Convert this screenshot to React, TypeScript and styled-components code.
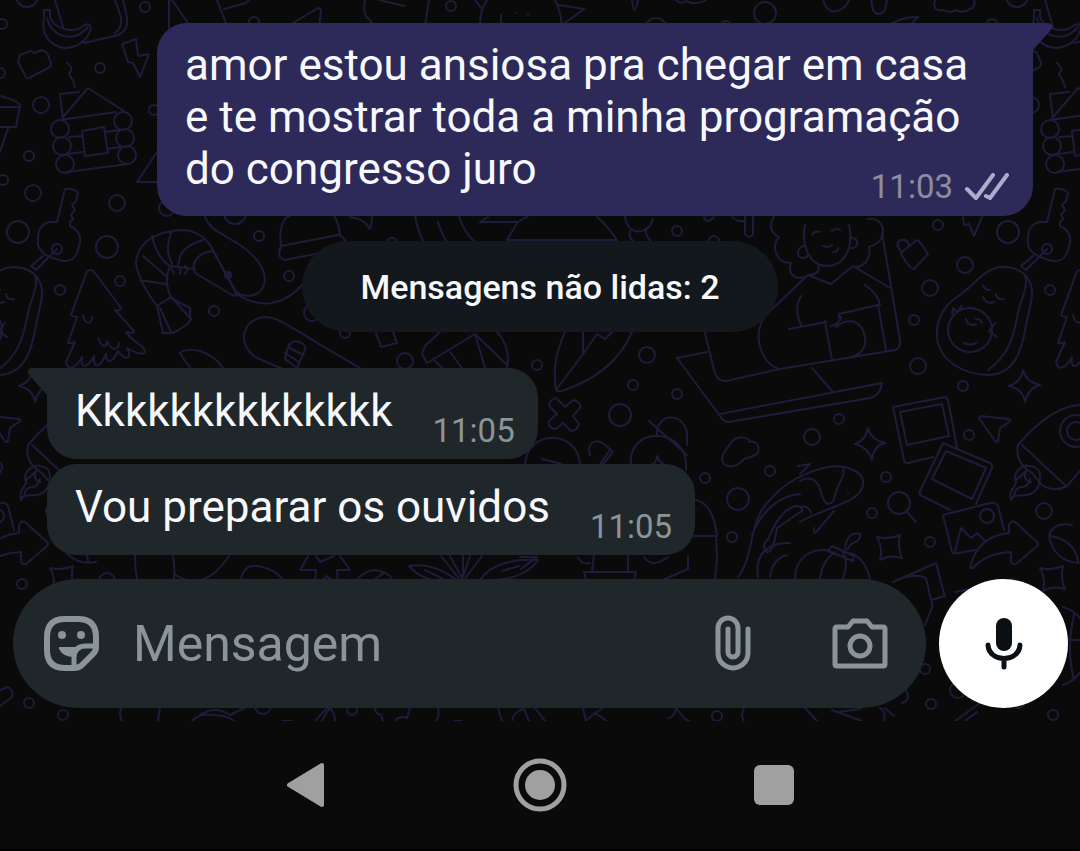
import React from "react";
import styled, { createGlobalStyle, css } from "styled-components";

const color = {
  page: "#0a0a0a",
  doodle: "#201b3a",
  sent: "#2d2a5a",
  received: "#20272a",
  notice: "#12181b",
  text: "#f7f8fc",
  muted: "#8b9498",
  sentMuted: "#8c8d9d",
  check: "#b3abcd",
  nav: "#a0a0a0",
};

const GlobalStyle = createGlobalStyle`
  *, *::before, *::after { box-sizing: border-box; }
  body {
    margin: 0;
    background: ${color.page};
    color: ${color.text};
    font-family: Roboto, "Liberation Sans", sans-serif;
  }
  button { border: 0; padding: 0; background: none; cursor: pointer; }
`;

const Screen = styled.div`
  display: flex;
  flex-direction: column;
  min-height: 100vh;
  background: ${color.page};
`;

const Chat = styled.main`
  position: relative;
  isolation: isolate;
  flex: 1;
  display: flex;
  flex-direction: column;
  overflow: hidden;
`;

const WallpaperArt = styled.svg`
  position: absolute;
  inset: 0;
  z-index: -1;
  width: 100%;
  height: 100%;
  fill: none;
  stroke: ${color.doodle};
  stroke-width: 2;
  stroke-linecap: round;
  stroke-linejoin: round;
`;

const Messages = styled.section`
  flex: 1;
  display: flex;
  flex-direction: column;
  justify-content: flex-end;
  padding: 23px 47px 24px;
`;

const Bubble = styled.article<{ $sent?: boolean; $tail?: boolean }>`
  position: relative;
  display: flow-root;
  max-width: 876px;
  font-size: 44px;
  line-height: 52px;
  border-radius: 30px;
  ${({ $sent }) =>
    $sent
      ? css`
          align-self: flex-end;
          padding: 16px 40px 9px 28px;
          background: ${color.sent};
        `
      : css`
          align-self: flex-start;
          padding: 17px 39px 8px 28px;
          background: ${color.received};
        `}
  ${({ $sent, $tail }) =>
    $tail && ($sent ? "border-top-right-radius: 0;" : "border-top-left-radius: 0;")}
  & + & { margin-top: 5px; }
`;

const Tail = styled.svg<{ $sent?: boolean }>`
  position: absolute;
  top: 0;
  width: 20px;
  height: 30px;
  ${({ $sent }) =>
    $sent
      ? css`
          left: 100%;
          fill: ${color.sent};
        `
      : css`
          right: 100%;
          fill: ${color.received};
          transform: scaleX(-1);
        `}
`;

const Meta = styled.span<{ $sent?: boolean }>`
  float: right;
  display: flex;
  align-items: center;
  gap: 12px;
  margin-top: ${({ $sent }) => ($sent ? 24 : 26)}px;
  margin-left: 40px;
  margin-right: -16px;
  color: ${({ $sent }) => ($sent ? color.sentMuted : color.muted)};
  font-size: 33px;
  line-height: 40px;
`;

const Notice = styled.p`
  align-self: center;
  margin: 25px 0 36px;
  padding: 26px 58px 25px;
  border-radius: 46px;
  background: ${color.notice};
  font-size: 34px;
  font-weight: 500;
  line-height: 40px;
`;

const Composer = styled.form`
  display: flex;
  align-items: center;
  gap: 13px;
  padding: 0 12px 13px 13px;
`;

const Field = styled.div`
  flex: 1;
  min-width: 0;
  display: flex;
  align-items: center;
  height: 129px;
  padding: 0 38px 0 30px;
  border-radius: 65px;
  background: ${color.received};
`;

const TextInput = styled.input`
  flex: 1;
  min-width: 0;
  margin: 0 16px 0 33px;
  padding: 0;
  border: 0;
  outline: 0;
  background: none;
  color: ${color.text};
  font: 400 50px/60px Roboto, "Liberation Sans", sans-serif;
  &::placeholder { color: ${color.muted}; opacity: 1; }
`;

const IconButton = styled.button`
  display: flex;
  flex: none;
  color: ${color.muted};
  & + & { margin-left: 81px; }
`;

const MicButton = styled.button`
  flex: none;
  display: grid;
  place-items: center;
  width: 129px;
  height: 129px;
  border-radius: 50%;
  background: #fff;
  color: #0b1014;
`;

const NavBar = styled.nav`
  display: flex;
  align-items: center;
  justify-content: center;
  gap: 174px;
  height: 130px;
  border-bottom: 2px solid #000;
`;

const NavButton = styled.button`
  display: grid;
  place-items: center;
  width: 60px;
  height: 60px;
  color: ${color.nav};
`;

const TILE = 990;

const smallRings = [
  [2, 24], [145, 7], [100, 68], [0, 73], [29, 156], [3, 180], [154, 110], [60, 290], [120, 281],
  [259, 236], [289, 276], [214, 311], [345, 333], [254, 22], [451, 6], [726, 26], [938, 225],
  [914, 320], [537, 365], [633, 385], [677, 394], [705, 478], [770, 471], [732, 537], [963, 386],
  [839, 419], [969, 435], [886, 477], [872, 513], [930, 542], [22, 584], [29, 703], [63, 715],
  [352, 710], [717, 716], [925, 669], [931, 704], [392, 243], [677, 231], [714, 241],
];
const mediumRings = [
  [41, 105], [33, 193], [117, 203], [167, 208], [312, 313], [965, 265], [930, 288], [918, 366],
  [647, 355], [812, 437], [54, 511], [107, 581], [263, 706], [405, 361], [958, 690],
];
const largeRings = [
  [27, -4], [18, 232], [107, 247], [235, 213], [765, 13], [620, 415], [738, 499], [656, 29],
];

const doodles = [
  // banana and cup
  "M44 10l6 0v7c4 12 23 17 33 9q6-4 8 1c-2 13-14 21-26 21C47 46 41 31 44 18zM47 18c4 19 27 26 41 9",
  "M55 0l8 27M115 0c6 15 10 26 0 33M123 0c4 18 9 28-5 35l-34 8",
  // toy brick, smoke, lightning
  "M18 62l2-7 11-4 3 2 8-3 5 3 4 10q0 4-3 5L29 78q-3 1-4-3z",
  "M67 63c6 5 5 8 2 10c1 5 3 4 4 8l2 6",
  "M122 44l14-5 2 17 11-2-9 23-7-14-5-1z",
  // log cabin
  "M63 119L60 94l19-2M63 117L88 88l36 23M60 120l56-8M69 137l13-1M68 154l15-2M82 131l22-4 4 26-23 3zM105 132l15-2M107 149l13-2M67 172l61-8",
  "M51 129a9 9 0 1 0 18 0a9 9 0 1 0-18 0M53 146a9 9 0 1 0 18 0a9 9 0 1 0-18 0M56 164a9 9 0 1 0 18 0a9 9 0 1 0-18 0M114 121a9 9 0 1 0 18 0a9 9 0 1 0-18 0M116 138a9 9 0 1 0 18 0a9 9 0 1 0-18 0M118 155a9 9 0 1 0 18 0a9 9 0 1 0-18 0",
  // flower pot, tent
  "M0 96q20 5 20 10l-4 21H0M0 107h18M8 128L0 152M157 152l-20 30h20",
  // key on a ring
  "M65 189q9-1 13 4l-2 8-4 4 3 5-4 5 2 4-3 3v4c10 5 12 12 9 20c-2 10-6 16-16 15c-12-3-22-6-25-16c-1-12 1-21 12-23h7zM52 249a5 5 0 1 0 10 0a5 5 0 1 0-10 0M57 249L36 270M43 256l-12 10 5 4",
  // fir tree
  "M90 270q-3 0-4 4L71 315q3 2 6 2l-9 26q3 1 7-1L66 362C68 372 76 368 82 357C80 368 86 370 94 356C93 370 100 368 106 354C106 364 112 364 118 351C126 362 133 358 127 348C135 353 145 356 145 351C144 345 132 342 126 332q8 2 8-1L115 310q6 1 6-2L95 273q-2-3-5-3zM83 315c2 10 9 10 9 2M98 338c4 10 9 10 9 3c4 10 12 10 12 2",
  // shrimp
  "M157 306C145 290 137 275 136 262C138 240 160 230 185 230C200 232 208 240 213 250L237 295q-3 1-5 0L195 273C190 262 200 252 213 251M157 306l14-9 20 22q-2 6-18 14h-10zM160 308l11 24M171 298l19 10v8M171 297C165 285 166 275 170 266M140 280l25 4M143 256l23 20M152 236q5 22 18 30M172 231q-8 17 0 33M203 240q-25 8-24 23M170 266q4 6 4 8M178 265q4 5 2 9M185 266q4 4 0 8M170 266l25 3",
  "M205 217C210 230 220 232 240 245C255 255 268 270 264 285C258 300 240 297 235 290L213 251M237 294C260 310 285 305 303 284",
  // bobble hat, snowboard, leaf
  "M281 247C278 225 285 217 290 216M335 217q4 8 5 18M281 246l57-11q6 1 8 8M281 246q-5 12 4 14l35-7",
  "M285 370L257 358C235 345 243 318 265 317C280 317 290 328 360 368M288 347q4-8 12-5q8 4 4 10l-7 16-12-9zM288 347l15 8M285 353l14 9",
  "M180 353q5-5 20-2q15 5 23 17M180 353q4 8 10 14",
  // shapes around the unread notice
  "M350 217q15 2 20 12q2-5 2-12M415 216q3 15 8 25M438 222q3 10 8 19M459 216q4 15 15 25M488 217l-8 5h38l10-6M518 222l-11 18h110q-10-15-20-23",
  "M625 217q2 12 10 14q14 2 18-12M630 231q-2 6 4 11M646 231q0 6 5 10M704 217q2 8 10 0M745 217v17q4 6 8 0v-17M732 217l6 4h8",
  "M376 333l5 14 16-4-4-11M440 332l-15 14-3 8 5 9 48-29M475 334l32 31M475 334l10 34M450 352l12 16M435 361l8 8M497 332q14 15 10 36",
  "M565 332C555 355 553 370 556 390q3 2 6 1C595 380 620 360 632 332M583 332v22L556 390M583 354l14-20 8 5 8-8",
  // woman with a laptop
  "M805 225c-4 22 5 41 22 41c18 0 27-20 22-41M805 246c-8 0-10 12-2 12q5 0 5-5M850 238c9-2 10 11 1 10M774 217c-6 8-3 16 5 20c-8 8-4 26 12 26c-4 10 4 20 18 12c6 0 12-4 9-9M868 219c9-2 16 6 15 14c-1 8-7 12-14 14c2 8-2 20-14 20M812 235q3-5 8-3M832 231q4-4 8-1M823 246q6 2 9-1M833 252q5 0 5-4",
  "M808 275l23 9 22-18 37 22M808 275L768 313C750 330 760 365 780 369M882 233l18 107q1 8-5 10L780 369M789 329l37-7M801 296c-5 8-5 18 0 29M825 321l7 39M839 318v-4l39-9 8 45M836 327c10-8 25-10 29 10c2 10-5 18-12 19M865 285q14 10 15 20M841 317q-2 8-10 9",
  "M705 333l9 37q3 12 12 11l54-12M707 352l-30 6 43 58q3 6 9 6l141-24q10-2 12-15l-162 31M812 368l20 23",
  // bag
  "M902 252l15-12q3 1 11 14l-14 15q-4 0-13-15zM902 252c-8-8-4-13 3-12q4 2 4 6M963 217l1 8 5-1 5 12 8-19",
  // avocado pair
  "M1003 267C985 267 975 285 957 297C940 308 936 325 937 338C940 362 965 375 990 375C1015 373 1022 350 1026 325C1030 305 1034 295 1031 285C1027 272 1015 267 1003 267zM1025 275c3 10-1 18-5 30c-6 22-5 45-32 65M948 330a22 22 0 1 0 44 0a22 22 0 1 0-44 0M983 285q1 5 7 5M996 294q1 6 8 5M983 297q4 8 11 5M966 319q2 8 10 5M976 319q5 0 6 4M964 343q6 3 12 0M952 314l1-6 4 4 5-6M995 323l-6 8 8 6",
  // cross, faces and bun
  "M556 398l9 9 8-7q9 2 7 8l-7 8 6 8q-2 7-8 7l-8-8-7 6q-9-1-7-8l8-7-8-8q0-6 7-8z",
  "M525 467C525 428 580 428 580 467M542 459l20 5M590 455c-4-12 6-17 14-11l9 8-11 13M600 464l10-14M631 467C625 425 690 425 686 470M657 436c-2-25 30-24 30 0v9M649 421l38 34M652 464q4 0 5-8q3 7 6 8",
  "M724 464c-6-8 4-16 6-20c6-10 20-7 20-2c10-2 12 12 3 14c-8 4-8 0-12 6q-10 8-17 2",
  "M695 500q18 3 22 35M694 536h23M716 536l1 22-2 21M688 557v12l-23 10M594 555l-2 17M628 555v17M586 580l-2-8h52l-2 8M644 557q8 12 24 0M578 557q3 8 12 6M520 557h17l-16 12",
  // whale
  "M738 577C755 555 748 520 770 500C790 475 830 462 848 468C868 474 868 490 850 500C830 510 812 514 800 522M752 535c10-26 30-40 48-41M800 474l10-10-12 2M768 540c6-16 14-30 27-34q8 0 7 5l-25 17q-4 25-10 24q-6-6 0-12M800 481c10-6 18 0 20 8c2 8 4 14 8 15c8 0 6-12 11-20q6-10 4-15M814 528q-1 8 3 3l17-20M800 507q8-2 11 6M758 577c-4-26 14-35 32-34M770 577q2-18 17-22M848 493h0",
  // pumpkin
  "M795 579c0-24 20-32 35-28M820 579q2-18 15-27M843 579q6-18 0-26M870 579q-6-24-22-26M828 551l4-5 22 10-1 5zM845 549q2-18 15-15q2 6-9 10l-4 6",
  // instant photos and a picture
  "M893 407L945 397q2 0 3 3l9 48M893 407l11 53q1 4 4 3l25-6M900 412l42-8 7 32-42 9zM943 443l47 20q3 2 2 5l-16 36M943 443l-23 48q-1 4 2 5l28 14M946 451l40 17-14 31-40-20z",
  "M943 515l47-12q6-1 8 3l6 24M943 515l9 37q2 2 6 1l18-3M955 551l6-23 10 10 6-5 8 8M980 516a7 7 0 1 0 14 0a7 7 0 1 0-14 0",
  "M970 568C975 545 990 535 1009 533v-8q2-5 6-3l22 20q2 2 0 4l-21 18q-5 1-5-4v-8C990 553 980 560 973 568z",
  "M980 416l29 3q3 1 0 3l-9 6-2 13q-2 2-3 0l-16-23z",
  // magnifier
  "M888 503a11 11 0 1 0 22 0a11 11 0 1 0-22 0M907 512l9 10",
  // sparkles
  "M1023 370q3 12 17 15q-12 3-15 17q-2-13-16-16q12-4 14-16zM868 428q3 12 17 15q-12 3-13 17q-4-13-17-16q11-4 13-16zM877 537q12 3 23-2q-3 12 2 23q-12-4-22 2q3-12-3-23zM1040 568q12 3 23-2q-3 12 2 23q-12-4-22 2q3-12-3-23z",
  // rocket with flame
  "M1085 405C1060 403 1035 425 1018 445c-3 15 5 22 14 28l10 12q12 8 25 1L1085 465M1022 445l43 40M1060 431a16 16 0 1 0 32 0a16 16 0 1 0-32 0M1067 431a9 9 0 1 0 18 0a9 9 0 1 0-18 0",
  "M1040 477c0-8-4-10-10-11c-6-2-18 6-14 14c2 6-8 8-5 20c2-6 6-3 9-5c12 2 20-6 20-18zM1015 480q6-3 12-10q-6 9 4 12M1014 495q2-8 8-8t8-8",
  // heart, book and ball
  "M1072 525c-15-3-25 5-22 15c5 18 20 25 36 22M1051 536q24 5 27 25",
  "M893 582l43-19 9 34M893 582q20-10 33-4l5 22q3 5 0 10l-6 15M931 600l14-4M955 592l20-4M902 685q12 14 0 18M885 708l9 8M1063 607c35 10 35 65 0 78M1066 640h20M1074 615q-8 35 0 65",
  // row above the text field
  "M135 555q0 14 2 24M173 555q2 12 1 24M174 574q30 20 55-18M240 584q2-20 18-18q20 4 26 16M308 556l-8 14h16l-1 14M316 556l4 6 14-6M340 556l10 14h-13l1 14M318 584l9-8 8 8M355 582q15-20 35-6l3 8M371 582l14-10",
  "M409 566q25-4 50 16q-35 2-50-16zM425 570l18 9M441 556l20 25M450 556l13 24M463 556v22M470 556l-8 24M482 556l-18 24M480 580q15-22 58-20q-15 22-58 20zM502 571l17-5",
  // row below the text field
  "M121 708q-2 8 1 13M160 708l-2 13M192 721q8-8 20-6q15 0 22 6M200 715q15-10 30 0l14-7M282 721h10M315 721l12-13M322 721q5-10 8-13q5 6 5 13M375 708q0 6 6 7l2 6M395 721q4-6 12-3l3-10M438 708q2 8-2 13M455 721h7M498 708l4 13M512 721q2-10 12-12l5 12M535 708l10 13M583 708l3 13 9-8 12 8M595 713l8-5M668 718q6 0 8-10l8 10 5 3M744 708q-4 8 0 13M805 708l12 13M832 710l30 11M838 712l22-3M884 721q2-10-4-13M0 690l8-3q6 4 4 10L0 706M955 721l25-18M965 721l12-9",
  // top edge
  "M169 0v33M172 0l18 26M217 0l10 26M224 9l22-6 3-3M288 26l30-18q3 0 3 4l-2 14M365 0q-3 15 5 20l4 6M379 0l26 6M429 0l-4 26M475 0l6 8M487 0q-7 10-7 26M501 15v8M516 13h0M528 15h0M555 0q6 12 7 26M559 5l25 4-22 16M632 0q2 20 6 0M676 0q5 5 10 1q10 5 20-1M823 0q6 18 20 8q5-4 6-8M871 0l2 10q5 8 12 0l2-10M935 0q-3 12 8 10q8 4 12 0q8 4 15-1q6-2 4-9M890 24q15-8 28-7l-6 6",
];

function Rings({ points, r }: { points: number[][]; r: number }) {
  return (
    <>
      {points.map(([x, y]) => (
        <circle key={`${x}-${y}`} cx={x} cy={y} r={r} />
      ))}
    </>
  );
}

function Wallpaper() {
  return (
    <WallpaperArt aria-hidden="true">
      <defs>
        <g id="doodles">
          {doodles.map((d) => (
            <path key={d} d={d} />
          ))}
          <Rings points={smallRings} r={5} />
          <Rings points={mediumRings} r={8} />
          <Rings points={largeRings} r={11} />
          <circle cx="228" cy="275" r="3" fill={color.doodle} />
        </g>
      </defs>
      {[-1, 0, 1, 2].map((n) => (
        <use key={n} href="#doodles" x={n * TILE} />
      ))}
    </WallpaperArt>
  );
}

function BubbleTail({ sent }: { sent?: boolean }) {
  return (
    <Tail $sent={sent} viewBox="0 0 20 30" aria-hidden="true">
      <path d="M-1 0H16Q20 1 19 5Q18 7 16 9L0 27H-1Z" />
    </Tail>
  );
}

function DoubleCheck() {
  return (
    <svg width="44" height="28" viewBox="0 0 44 28" fill="none" stroke={color.check} strokeWidth="4" strokeLinecap="round" strokeLinejoin="round" role="img" aria-label="Entregue">
      <path d="M2 16L11 25L28 2M21 23L25 25L42 2" />
    </svg>
  );
}

function StickerIcon() {
  return (
    <svg width="57" height="57" viewBox="0 0 57 57" fill="none" stroke="currentColor" strokeWidth="6" strokeLinejoin="round" aria-hidden="true">
      <path d="M22 4H35Q53 4 53 22V32Q53 36 50 39L39 50Q36 53 31 53H22Q4 53 4 35V22Q4 4 22 4Z" />
      <path d="M31 53V43Q31 31 43 31H53" strokeWidth="5" />
      <path d="M16 32H37Q32 35 31 42Q20 42 16 34Z" fill="currentColor" stroke="none" />
      <circle cx="19" cy="20" r="4" fill="currentColor" stroke="none" />
      <circle cx="38" cy="20" r="4" fill="currentColor" stroke="none" />
    </svg>
  );
}

function ClipIcon() {
  return (
    <svg width="36" height="57" viewBox="0 0 36 57" fill="none" stroke="currentColor" strokeWidth="5" strokeLinecap="round" aria-hidden="true">
      <path d="M33 14V38A15 15 0 0 1 3 38V13A10 10 0 0 1 23 13V37A5 5 0 0 1 13 37V14" />
    </svg>
  );
}

function CameraIcon() {
  return (
    <svg width="56" height="51" viewBox="0 0 56 51" fill="none" stroke="currentColor" strokeWidth="5" strokeLinejoin="round" aria-hidden="true">
      <path d="M5 9H16L21 3H35L40 9H51Q53 9 53 11V46Q53 48 51 48H5Q3 48 3 46V11Q3 9 5 9Z" />
      <circle cx="28" cy="28" r="10" />
    </svg>
  );
}

function MicIcon() {
  return (
    <svg width="38" height="54" viewBox="0 0 38 54" fill="none" stroke="currentColor" strokeWidth="5" strokeLinecap="round" aria-hidden="true">
      <rect x="11" y="1" width="16" height="33" rx="8" fill="currentColor" stroke="none" />
      <path d="M3 28C4 46 34 46 35 28M19 42V50" />
    </svg>
  );
}

export default function App() {
  return (
    <Screen>
      <GlobalStyle />
      <Chat>
        <Wallpaper />
        <Messages>
          <Bubble $sent $tail>
            <BubbleTail sent />
            amor estou ansiosa pra chegar em casa e te mostrar toda a minha programação do congresso juro
            <Meta $sent>
              <time>11:03</time>
              <DoubleCheck />
            </Meta>
          </Bubble>
          <Notice>Mensagens não lidas: 2</Notice>
          <Bubble $tail>
            <BubbleTail />
            Kkkkkkkkkkkkkk
            <Meta>
              <time>11:05</time>
            </Meta>
          </Bubble>
          <Bubble>
            Vou preparar os ouvidos
            <Meta>
              <time>11:05</time>
            </Meta>
          </Bubble>
        </Messages>
        <Composer onSubmit={(e) => e.preventDefault()}>
          <Field>
            <IconButton type="button" aria-label="Figurinhas">
              <StickerIcon />
            </IconButton>
            <TextInput type="text" placeholder="Mensagem" aria-label="Mensagem" />
            <IconButton type="button" aria-label="Anexar">
              <ClipIcon />
            </IconButton>
            <IconButton type="button" aria-label="Câmera">
              <CameraIcon />
            </IconButton>
          </Field>
          <MicButton type="button" aria-label="Gravar áudio">
            <MicIcon />
          </MicButton>
        </Composer>
      </Chat>
      <NavBar aria-label="Sistema">
        <NavButton type="button" aria-label="Voltar">
          <svg width="38" height="46" viewBox="0 0 38 46" fill="currentColor" stroke="currentColor" strokeWidth="4" strokeLinejoin="round">
            <path d="M2 23L35 3V43Z" />
          </svg>
        </NavButton>
        <NavButton type="button" aria-label="Início">
          <svg width="56" height="58" viewBox="0 0 56 58">
            <circle cx="28" cy="29" r="24" fill="none" stroke="currentColor" strokeWidth="5" />
            <circle cx="28" cy="29" r="15" fill="currentColor" />
          </svg>
        </NavButton>
        <NavButton type="button" aria-label="Recentes">
          <svg width="40" height="40" viewBox="0 0 40 40">
            <rect width="40" height="40" rx="6" fill="currentColor" />
          </svg>
        </NavButton>
      </NavBar>
    </Screen>
  );
}
